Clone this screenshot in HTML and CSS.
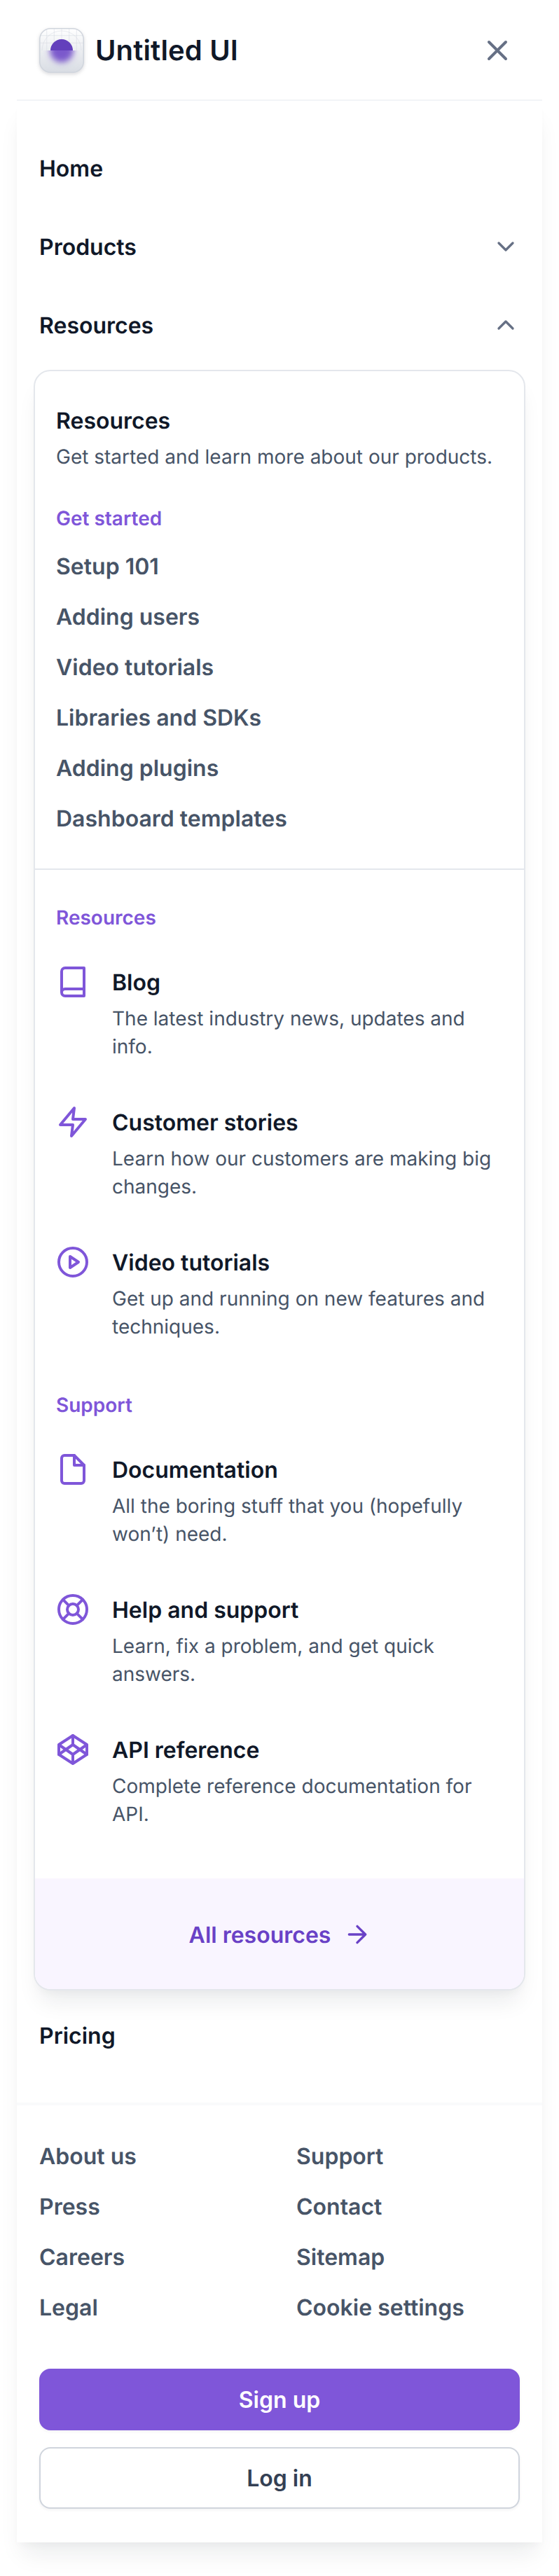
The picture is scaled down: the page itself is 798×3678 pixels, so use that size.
FILE: index.html
```html
<!DOCTYPE html>
<html lang="en">
<head>
<meta charset="utf-8">
<title>Untitled UI</title>
<link rel="stylesheet" href="styles.css">
</head>
<body>
<div class="page">
  <header class="header">
    <div class="brand">
      <div class="logo">
        <svg width="64" height="64" viewBox="0 0 64 64">
          <defs>
            <linearGradient id="bg" x1="0" y1="0" x2="0" y2="1"><stop offset="0" stop-color="#fff"/><stop offset="1" stop-color="#D8DCE3"/></linearGradient>
            <filter id="soft" x="-50%" y="-50%" width="200%" height="200%"><feGaussianBlur stdDeviation="4"/></filter>
            <clipPath id="upper"><rect width="64" height="32"/></clipPath>
            <clipPath id="lower"><rect y="32" width="64" height="32"/></clipPath>
          </defs>
          <rect width="64" height="64" rx="16" fill="url(#bg)"/>
          <g clip-path="url(#upper)" fill="none" stroke="#D0D5DD" stroke-opacity=".45">
            <path d="M10.7 1V32M21.3 1V32M32 1V32M42.7 1V32M53.3 1V32M1 10.7H63M1 21.3H63"/>
            <circle cx="32" cy="32" r="28"/>
          </g>
          <circle cx="32" cy="32" r="16" fill="#6340BC" clip-path="url(#upper)"/>
          <g clip-path="url(#lower)"><circle cx="32" cy="32" r="17" fill="#6941C6" fill-opacity=".85" filter="url(#soft)"/></g>
          <rect x=".75" y=".75" width="62.5" height="62.5" rx="15.25" fill="none" stroke="#D0D5DD" stroke-width="1.5"/>
        </svg>
      </div>
      <span class="brand-name">Untitled UI</span>
    </div>
    <button class="close" aria-label="Close">
      <svg class="icon gray" width="48" height="48" viewBox="0 0 24 24"><path d="M18 6 6 18M6 6l12 12"/></svg>
    </button>
  </header>
  <div class="panel">
    <nav class="nav">
      <a class="nav-item"><span class="line">Home</span></a>
      <a class="nav-item"><span class="line">Products</span>
        <svg class="icon gray small" width="40" height="40" viewBox="0 0 20 20"><path d="m5 7.5 5 5 5-5"/></svg>
      </a>
      <a class="nav-item"><span class="line">Resources</span>
        <svg class="icon gray small" width="40" height="40" viewBox="0 0 20 20"><path d="m15 12.5-5-5-5 5"/></svg>
      </a>
      <div class="card">
        <section class="intro">
          <h2 class="line title">Resources</h2>
          <p class="text">Get started and learn more about our products.</p>
          <h3 class="label intro-label">Get started</h3>
          <ul class="links">
            <li class="line">Setup 101</li>
            <li class="line">Adding users</li>
            <li class="line">Video tutorials</li>
            <li class="line">Libraries and SDKs</li>
            <li class="line">Adding plugins</li>
            <li class="line">Dashboard templates</li>
          </ul>
        </section>
        <div class="groups">
          <section class="group">
            <h3 class="label">Resources</h3>
            <div class="item">
              <svg class="icon" width="48" height="48" viewBox="0 0 24 24"><path d="M4 19.5A2.5 2.5 0 0 1 6.5 17H20M4 19.5A2.5 2.5 0 0 0 6.5 22H20V2H6.5A2.5 2.5 0 0 0 4 4.5v15z"/></svg>
              <div><h4 class="line title">Blog</h4><p class="text">The latest industry news, updates and info.</p></div>
            </div>
            <div class="item">
              <svg class="icon" width="48" height="48" viewBox="0 0 24 24"><path d="M13 2 3 14h9l-1 8 10-12h-9l1-8z"/></svg>
              <div><h4 class="line title">Customer stories</h4><p class="text">Learn how our customers are making big changes.</p></div>
            </div>
            <div class="item">
              <svg class="icon" width="48" height="48" viewBox="0 0 24 24"><circle cx="12" cy="12" r="10"/><path d="m10 8 6 4-6 4V8z"/></svg>
              <div><h4 class="line title">Video tutorials</h4><p class="text">Get up and running on new features and techniques.</p></div>
            </div>
          </section>
          <section class="group">
            <h3 class="label">Support</h3>
            <div class="item">
              <svg class="icon" width="48" height="48" viewBox="0 0 24 24"><path d="M13 2H6a2 2 0 0 0-2 2v16a2 2 0 0 0 2 2h12a2 2 0 0 0 2-2V9l-7-7z"/><path d="M13 2v7h7"/></svg>
              <div><h4 class="line title">Documentation</h4><p class="text">All the boring stuff that you (hopefully won’t) need.</p></div>
            </div>
            <div class="item">
              <svg class="icon" width="48" height="48" viewBox="0 0 24 24"><circle cx="12" cy="12" r="10"/><circle cx="12" cy="12" r="4"/><path d="m4.93 4.93 4.24 4.24M14.83 14.83l4.24 4.24M14.83 9.17l4.24-4.24M4.93 19.07l4.24-4.24"/></svg>
              <div><h4 class="line title">Help and support</h4><p class="text">Learn, fix a problem, and get quick answers.</p></div>
            </div>
            <div class="item">
              <svg class="icon" width="48" height="48" viewBox="0 0 24 24"><path d="m12 2 10 6.5v7L12 22 2 15.5v-7L12 2zM12 22v-6.5M22 8.5l-10 7-10-7"/><path d="m2 15.5 10-7 10 7M12 2v6.5"/></svg>
              <div><h4 class="line title">API reference</h4><p class="text">Complete reference documentation for API.</p></div>
            </div>
          </section>
        </div>
        <a class="all"><span class="line">All resources</span>
          <svg class="icon small" width="40" height="40" viewBox="0 0 20 20"><path d="M4.167 10h11.666M10 4.167 15.833 10 10 15.833"/></svg>
        </a>
      </div>
      <a class="nav-item"><span class="line">Pricing</span></a>
    </nav>
    <footer class="footer">
      <div class="footer-links">
        <a class="line">About us</a><a class="line">Support</a>
        <a class="line">Press</a><a class="line">Contact</a>
        <a class="line">Careers</a><a class="line">Sitemap</a>
        <a class="line">Legal</a><a class="line">Cookie settings</a>
      </div>
      <div class="actions">
        <button class="button primary"><span class="line">Sign up</span></button>
        <button class="button"><span class="line">Log in</span></button>
      </div>
    </footer>
  </div>
</div>
</body>
</html>
```
FILE: styles.css
```css
* { box-sizing: border-box; margin: 0; padding: 0; }
body {
  background: #fff;
  font: 600 32px/48px Inter, "Liberation Sans", sans-serif;
  color: #101828;
  text-rendering: geometricPrecision;
}
.page { width: 798px; height: 3678px; padding: 0 24px; overflow: hidden; }
button { font: inherit; border: 0; background: none; }
.icon {
  display: block; flex: none; fill: none; stroke: #7f56d9;
  stroke-width: 2; stroke-linecap: round; stroke-linejoin: round;
}
.icon.gray { stroke: #667085; }
.icon.small { stroke-width: 1.667; }

/* 48px line with the baseline one pixel lower */
.line { display: block; height: 48px; line-height: 50px; }

.header {
  height: 144px; padding: 0 24px 0 32px; border-bottom: 2px solid #f2f4f7;
  display: flex; align-items: center; justify-content: space-between;
}
.brand { display: flex; align-items: center; gap: 16px; padding-top: 2px; }
.logo {
  width: 64px; height: 64px; border-radius: 16px;
  box-shadow: 0 2px 4px rgba(16, 24, 40, .06), 0 2px 6px rgba(16, 24, 40, .1);
}
.logo svg { display: block; }
.brand-name { font-size: 40px; letter-spacing: .15px; }
.close { padding: 18px 16px 16px; }

.panel {
  background: #fff;
  box-shadow: 0 24px 32px -8px rgba(16, 24, 40, .08), 0 8px 12px -4px rgba(16, 24, 40, .03);
}
.nav { padding: 48px 0; display: flex; flex-direction: column; gap: 16px; }
.nav-item {
  padding: 24px 32px; display: flex; align-items: center; justify-content: space-between;
}
.card {
  margin: 0 24px; border: 2px solid #e4e7ec; border-radius: 24px; background: #fff;
  box-shadow: 0 24px 32px -8px rgba(16, 24, 40, .08), 0 8px 12px -4px rgba(16, 24, 40, .03);
}
.intro { padding: 46px 30px 48px; border-bottom: 2px solid #e4e7ec; }
.title { font-size: 32px; font-weight: 600; }
.text { margin-top: 8px; font-size: 28px; line-height: 40px; font-weight: 400; color: #475467; }
.label { font-size: 28px; line-height: 40px; font-weight: 600; color: #7f56d9; }
.intro-label { margin-top: 48px; }
.links {
  margin-top: 24px; list-style: none; color: #475467;
  display: flex; flex-direction: column; gap: 24px;
}
.groups { padding: 48px 30px 72px; display: flex; flex-direction: column; gap: 72px; }
.item { display: flex; align-items: flex-start; gap: 32px; padding-top: 48px; }
.item + .item { padding-top: 64px; }
.all {
  display: flex; align-items: center; justify-content: center; gap: 18px;
  height: 158px; padding: 2px 0 0 2px; background: #f9f5ff; color: #6941c6; border-radius: 0 0 22px 22px;
}
.all .icon { stroke: #6941c6; }

.footer { border-top: 4px solid #f9fafb; padding: 48px 32px; }
.footer-links {
  display: grid; grid-template-columns: 1fr 1fr; gap: 24px 48px; color: #475467;
}
.actions { margin-top: 64px; display: flex; flex-direction: column; gap: 24px; }
.button {
  height: 88px; border-radius: 16px; border: 2px solid #d0d5dd; background: #fff; color: #344054;
  box-shadow: 0 2px 4px rgba(16, 24, 40, .05);
}
.primary { background: #7f56d9; border-color: #7f56d9; color: #fff; }
```
